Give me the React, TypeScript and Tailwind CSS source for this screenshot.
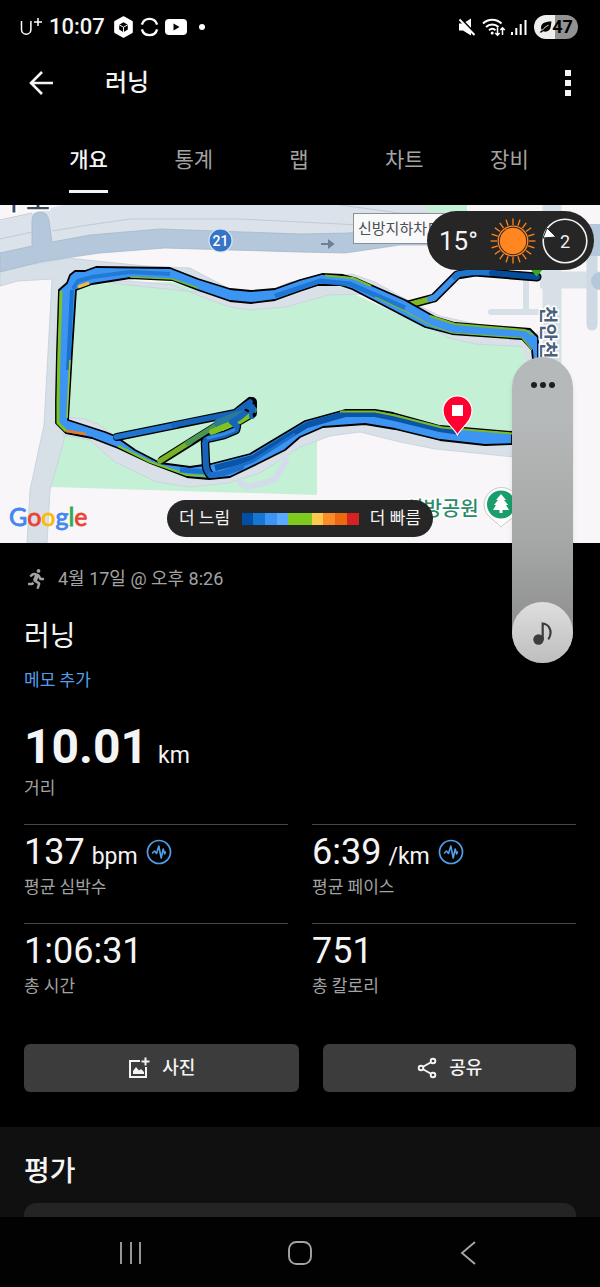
import React, { useState } from 'react';
import { FaRunning } from 'react-icons/fa';

const TABS = ['개요', '통계', '랩', '차트', '장비'];

const PACE_COLORS = [
  'bg-[#004ea6]',
  'bg-[#1776d2]',
  'bg-[#3c95f4]',
  'bg-[#58a9ff]',
  'bg-[#7fca1e]',
  'bg-[#7fca1e]',
  'bg-[#fdca4d]',
  'bg-[#fc8b2a]',
  'bg-[#ec6910]',
  'bg-[#d62222]',
];

interface Stat {
  value: string;
  unit?: string;
  label: string;
}

const STATS: Stat[] = [
  { value: '137', unit: 'bpm', label: '평균 심박수' },
  { value: '6:39', unit: '/km', label: '평균 페이스' },
  { value: '1:06:31', label: '총 시간' },
  { value: '751', label: '총 칼로리' },
];

function StatusBar() {
  return (
    <div className="flex h-[54px] shrink-0 items-center justify-between pl-5 pr-[22px]">
      <div className="flex items-center">
        <svg width="22" height="20" viewBox="0 0 22 20" fill="none" stroke="#fff" strokeWidth="1.5">
          <path d="M1.500 4v8.500a4.700 4.700 0 0 0 9.400 0V4M18 1v8M14 5h8" />
        </svg>
        <span className="ml-[7px] text-[22px] font-medium leading-6">10:07</span>
        <svg className="ml-2" width="21" height="24" viewBox="0 0 22 24">
          <path d="M11 1.500 20 6.500v11L11 22.500 2 17.500v-11z" fill="#fff" stroke="#fff" strokeWidth="1.500" strokeLinejoin="round" />
          <path d="M11 7 15.500 9.700v5L11 17.500 6.500 14.700v-5z" fill="#000" />
          <path d="M6.500 9.700 11 12.200 15.500 9.700 M11 12.200v5.500" fill="none" stroke="#fff" strokeWidth="1" />
        </svg>
        <svg className="ml-1.5" width="19" height="22" viewBox="0 0 20 22" fill="none" stroke="#fff" strokeWidth="2.500">
          <path d="M2 8.500a8.300 8.300 0 0 1 16 0M2 13.500a8.300 8.300 0 0 0 16 0" />
        </svg>
        <svg className="ml-1.5" width="22" height="16" viewBox="0 0 22 16">
          <rect width="22" height="16" rx="4" fill="#fff" />
          <path d="m8.500 4.500 6 3.500-6 3.500z" fill="#000" />
        </svg>
        <span className="ml-3 size-[6px] rounded-full bg-white" />
      </div>
      <div className="flex items-center">
        <svg width="18" height="18" viewBox="0 0 18 18">
          <path d="M1 5.500h4l8-5v17l-8-5H1z" fill="#fff" />
          <path d="M3 1 18 16.500" stroke="#000" strokeWidth="2" />
          <path d="M1.500 1.500 16.500 17" stroke="#fff" strokeWidth="2" />
        </svg>
        <svg className="ml-1.5" width="24" height="20" viewBox="0 0 24 20" fill="none" stroke="#fff" strokeWidth="2">
          <path d="M1 6.500a13 13 0 0 1 18.500 0M4 10a9 9 0 0 1 12.500 0M7 13.200a5 5 0 0 1 6.500 0" />
          <circle cx="10.200" cy="16" r="1.500" fill="#fff" stroke="none" />
          <path d="M15.500 10.500v7.500M13.300 16l2.200 2.200 2.200-2.200M20.500 18v-7M18.300 13l2.200-2.200 2.200 2.200" strokeWidth="1.500" />
        </svg>
        <svg className="ml-1" width="18" height="18" viewBox="0 0 18 18" stroke="#fff" strokeWidth="2">
          <path d="M2 14v3M6.300 10v7M10.700 6v11" />
          <path d="M15.500 2v15" />
        </svg>
        <div className="ml-1.5 flex h-6 w-11 items-center justify-center rounded-full bg-linear-to-r from-[#eee] from-47% to-[#929292] to-47% text-black">
          <svg width="13" height="12" viewBox="0 0 13 12">
            <path d="M12.500.500C7 .500 2 2 2 6.500c0 1 .300 1.800.800 2.500L.500 11.500h2l1.600-1.200c4 1.200 7.200-1 7.600-4.300z" />
            <path d="M3 9.500C5 7 7 5.500 9.500 4.200" stroke="#eee" fill="none" />
          </svg>
          <span className="text-lg font-bold leading-6">47</span>
        </div>
      </div>
    </div>
  );
}

function RouteMap() {
  return (
    <svg className="block w-full" viewBox="0 205 600 338" role="img">
      <rect y="205" width="600" height="338" fill="#f8f6f8" />

      {/* parks */}
      <path d="M76 290 92 284 172 282 230 300 251 304 300 290 345 290 400 315 460 340 530 345 525 433 440 427 375 412 345 412 317 430 317 495 51 487 64 425z" fill="#c4f0d6" />
      <path d="M385 205h82v6l-60 2z" fill="#c4f0d6" />

      {/* side lanes along the highway */}
      <path d="M0 221 30 214 62 205H427V240H350L160 232 52 247 0 257z" fill="#dbe2e9" />
      <path d="M0 220 32 213M0 239 32 232M52 231 82 226 130 219H240L360 225M340 205 400 213H460" fill="none" stroke="#c0cbd5" strokeWidth="1" />

      {/* west junction and the lane next to the river */}
      <path d="M0 270 68 258 145 266 190 268 205 276 232 290 205 290 172 276 96 280 76 290 64 440 50 490 47 543H27L30 490 44 425 52 279 18 281 0 286z" fill="#d7dfe7" stroke="#c4cfda" strokeWidth="0.800" />

      {/* paths on both sides of the loop */}
      <path d="M92 281 130 281 172 285 205 298 230 307 250 310 286 307 328 295 365 294 400 312 450 338 475 344 528 347 530 336 440 316 400 296 375 282 352 274 290 282 251 298z" fill="#d9e0e8" stroke="#c6d1dc" strokeWidth="0.800" />
      <path d="M522 345 525 360H537L540 330z" fill="#d9e0e8" />
      <path d="M68 417 85 419 98 424 112 434 150 460 190 472 250 462 300 432 345 418 440 434 514 438V457L435 449 400 442 360 432 330 436 300 447 260 473 228 483 190 487 157 482 115 462 90 440 62 435z" fill="#d9e0e8" stroke="#c6d1dc" strokeWidth="0.800" />
      <path d="m238 482 10 5 26-7 12-19-4-8" fill="none" stroke="#d3dcea" strokeWidth="6" />

      {/* east streets */}
      <path d="M552 205v340" stroke="#d7dfe7" strokeWidth="19" />
      <path d="M540 280h60" stroke="#d7dfe7" strokeWidth="17" />
      <path d="M526 275v36M491 312h47" stroke="#d7dfe7" strokeWidth="6" strokeLinecap="round" />
      <path d="M592 250v75" stroke="#cfd9e4" strokeWidth="11" strokeLinecap="round" />
      <path d="M585 240h15" stroke="#b5c7da" strokeWidth="32" />
      <circle cx="600" cy="281" r="9" fill="#b5c7da" />

      {/* highway */}
      <path d="M0 253 32 246V221q0-9 8-9t9 9L52 242 90 235 160 229 300 234 350 233 395 222H470V245L400 245 345 253 300 252 165 248 100 253 65 258 40 262 0 272z" fill="#b5c7da" stroke="#a4b9ce" strokeWidth="0.800" />
      <path d="M321 244h9M329 241l4 3-4 3z" stroke="#6f8194" strokeWidth="2" fill="#6f8194" />

      {/* road shield */}
      <circle cx="220.500" cy="240.500" r="11.500" fill="#3674c8" stroke="#d9e6f5" strokeWidth="1.200" />
      <text x="220.500" y="245.500" textAnchor="middle" fontSize="14" fontWeight="500" fill="#fff">21</text>

      {/* map labels */}
      <text x="2" y="210" fontSize="26" fontWeight="500" fill="#3b4660" stroke="#fff" strokeWidth="3" paintOrder="stroke">구도</text>
      <rect x="353.500" y="213.500" width="90" height="30" fill="#f9f9fa" stroke="#8b9198" />
      <text x="358" y="234" fontSize="15" fill="#4c4f55">신방지하차도</text>

      {/* run out to the start point */}
      <g fill="none" strokeLinejoin="round" strokeLinecap="round">
        <path d="m404 306 30-8 23-23 18-3 62 5" stroke="#000" strokeWidth="9" />
        <path d="m404 306 30-8" stroke="#7dbb25" strokeWidth="5.500" />
        <path d="m430 299 5-2 22-22" stroke="#3d92ee" strokeWidth="6" />
        <path d="m455 277 4-3 16-2 18 1" stroke="#1e76cf" strokeWidth="6" />
        <path d="m492 273 45 4" stroke="#074b9b" strokeWidth="6" />
      </g>

      {/* main loop */}
      <path
        d="M57 352 59 290 67 283 70 275 75 271 85 271 96 267 170 268 198 279 230 289 251 291 275 289 300 280 322 274 343 275 355 278 405 300 435 317 455 323 530 329 538 337 538 360 533 360 532 350 522 339 452 334 425 327 400 314 352 289 340 285 318 285 300 291 275 300 251 303 230 301 198 290 172 280 130 278 92 284 76 290 72 352 68 420 105 432 115 436 135 450 160 463 190 467 211 464 250 454 290 430 305 421 345 410 375 410 393 413 440 426 512 432 512 444 485 445 440 440 395 429 365 424 323 427 300 437 285 450 257 464 230 477 209 479 187 477 150 463 118 448 92 438 66 433 56 423 56 400z"
        fill="#3c95f3"
        stroke="#000"
        strokeWidth="1.800"
        strokeLinejoin="round"
      />
      <g fill="none" strokeLinejoin="round">
        <path d="M61 291 59 352 58 400v23l8 8" stroke="#7dc41f" strokeWidth="3" />
        <path d="M72 290 68 370" stroke="#1b73d0" strokeWidth="4" />
        <path d="M70 360 67 418" stroke="#a3c62a" strokeWidth="1.500" />
        <path d="m73 289 5-8 14-4 38-5 40 2" stroke="#1b73d0" strokeWidth="4" opacity="0.800" />
        <path d="m78 287 11-4" stroke="#f5bd3c" strokeWidth="3" />
        <path d="m130 277 42 2 26 9" stroke="#77b82d" strokeWidth="1.500" />
        <path d="m275 296 15-5 30-10 30 3 55 24" stroke="#1b73d0" strokeWidth="5" opacity="0.900" />
        <path d="m325 275.500 28 2.500 18 8M430 316l25 8 70 6 8 5" stroke="#7dbb25" strokeWidth="2" />
        <path d="m375 297 30 14 25 14 22 8 70 5 10 12" stroke="#7dbb25" strokeWidth="1.200" />
        <path d="m66 431 20 3" stroke="#f07b1a" strokeWidth="2.500" />
        <path d="m118 446 32 16 37 13 20 1" stroke="#7dc41f" strokeWidth="2" />
        <path d="m180 470 28 2" stroke="#1b73d0" strokeWidth="5" />
        <path d="m215 468 38-10 39-24 15-9 38-11 30 0 20 4 45 11 20 3" stroke="#0a55a8" strokeWidth="6" />
        <path d="m215 475 38-14 42-27" stroke="#1b6fc9" strokeWidth="3" />
        <path d="m340 411.500 35 0 20 4 47 12 70 6" stroke="#7dbb25" strokeWidth="2" />
      </g>

      {/* detour inside the park */}
      <g fill="none" strokeLinejoin="round" strokeLinecap="round">
        <path d="m117 437 118-24 15-12M162 460l56-35 31-11" stroke="#000" strokeWidth="8" />
        <path d="m252 402 0 11-14 8" stroke="#000" strokeWidth="10" />
        <path d="M210 475q-4-5-4-10l-1-22q0-4 6-5l13-3 12-5 1-4-5-4" stroke="#000" strokeWidth="8.500" />
        <path d="m160 461 30-19" stroke="#73b229" strokeWidth="5.500" />
        <path d="m188 443 30-19" stroke="#4a9553" strokeWidth="5.500" />
        <path d="m116 437 60-12" stroke="#1e74cf" strokeWidth="5.500" />
        <path d="m174 425 61-12 15-11" stroke="#1763b9" strokeWidth="5.500" />
        <path d="m218 423 18-7 14-4 3-2" stroke="#2a7a9e" strokeWidth="8" />
        <path d="m212 432 14-6 14-5 10-6" stroke="#7dc41f" strokeWidth="6" />
        <path d="M210 475q-4-5-4-10l-1-22q0-4 6-5l13-3 12-5 1-4-5-4 8-5 12-10 0 9" stroke="#1665ba" strokeWidth="6" />
        <path d="m208 438 16-4 10-4" stroke="#3289e6" strokeWidth="3" />
        <path d="m246 410 2 1M254 414v2" stroke="#000" strokeWidth="2.500" />
        <path d="m211 475 10-1 20-7" stroke="#1b6fc9" strokeWidth="6" />
      </g>
      <path d="m531 270 5.500 6.500 6-6.500z" fill="#3ba81e" />

      <text transform="translate(541 306) rotate(90)" fontSize="19" fontWeight="700" fill="#4a607b" stroke="#fff" strokeWidth="3" paintOrder="stroke">천안천</text>

      {/* finish pin */}
      <path d="M457.500 435c-4-8-14.500-13-14.500-24.500a14.500 14.500 0 0 1 29 0c0 11.500-10.500 16.500-14.500 24.500z" fill="#ff0030" stroke="#fff" strokeWidth="1.200" />
      <path d="M452 405h11v11h-11z" fill="#fff" />

      {/* park marker */}
      <text x="405" y="516" fontSize="20" fontWeight="500" fill="#2c8a68" stroke="#fff" strokeWidth="3" paintOrder="stroke">신방공원</text>
      <path d="M501 527c-3-5-17-10-17-22a17.500 17.500 0 0 1 35 0c0 12-14 17-18 22z" fill="#fff" stroke="#c9c9c9" strokeWidth="1" />
      <circle cx="501" cy="504.500" r="14" fill="#1a9e6c" />
      <path d="m501 494 5 6h-2l4 5h-2l3 5h-6.500v3h-3v-3H493l3-5h-2l4-5h-2z" fill="#fff" />

      <text x="9" y="526" fontSize="25" fontFamily="Lato, sans-serif" strokeWidth="0.800">
        <tspan fill="#4285f4" stroke="#4285f4">G</tspan>
        <tspan fill="#ea4335" stroke="#ea4335">o</tspan>
        <tspan fill="#fbbc05" stroke="#fbbc05">o</tspan>
        <tspan fill="#4285f4" stroke="#4285f4">g</tspan>
        <tspan fill="#34a853" stroke="#34a853">l</tspan>
        <tspan fill="#ea4335" stroke="#ea4335">e</tspan>
      </text>
    </svg>
  );
}

function WeatherPill() {
  const rays = Array.from({ length: 20 }, (_, i) => i * 18);
  return (
    <div className="absolute right-1.5 top-1.5 flex h-[59px] w-[167px] items-center rounded-full bg-[#262626] pl-3">
      <span className="w-[39px] text-[26px] leading-8">15°</span>
      <svg className="ml-3" width="46" height="46" viewBox="-23 -23 46 46">
        <circle r="13.200" fill="#ff8620" />
        <g stroke="#ff8620" strokeWidth="1.300">
          <circle r="14.800" fill="none" />
          {rays.map((deg) => (
            <path key={deg} d="M0-16v-6.500" transform={`rotate(${deg})`} />
          ))}
        </g>
      </svg>
      <svg className="ml-1.5" width="46" height="46" viewBox="-23 -23 46 46">
        <circle r="21.800" fill="none" stroke="#f1f1f1" strokeWidth="1.600" />
        <path d="m-22-3 4-10 9 9z" fill="#fff" stroke="#262626" strokeWidth="1" />
        <text y="7" textAnchor="middle" fontSize="18" fill="#f1f1f1">2</text>
      </svg>
    </div>
  );
}

function PaceLegend() {
  return (
    <div className="absolute bottom-1.5 left-1/2 flex h-[37px] w-[266px] -translate-x-1/2 items-center justify-between rounded-full bg-[#262626] px-3 text-[17px]">
      <span>더 느림</span>
      <div className="flex h-3 w-[117px]">
        {PACE_COLORS.map((color, i) => (
          <span key={i} className={`flex-1 ${color}`} />
        ))}
      </div>
      <span>더 빠름</span>
    </div>
  );
}

function VolumePanel() {
  const [volume, setVolume] = useState(0);
  return (
    <div className="absolute right-[27px] top-[357px] flex h-[306px] w-[61px] flex-col items-center justify-between rounded-full bg-linear-to-b from-[#b6b9b9] from-20% via-[#a6a7a7] via-60% to-[#868686] shadow-md">
      <button aria-label="더보기" className="flex gap-[3px] px-3 py-[25px]">
        <span className="size-[6px] rounded-full bg-[#1f1f1f]" />
        <span className="size-[6px] rounded-full bg-[#1f1f1f]" />
        <span className="size-[6px] rounded-full bg-[#1f1f1f]" />
      </button>
      <div className="flex size-[61px] items-center justify-center rounded-full bg-linear-to-b from-[#dedede] to-[#bebebe]">
        <svg width="22" height="24" viewBox="0 0 22 24">
          <circle cx="6.500" cy="18.500" r="5.200" fill="#3d3d3d" />
          <path d="M10.700 18.500V2.500C17 3 21 10.500 16.800 17.500" fill="none" stroke="#3d3d3d" strokeWidth="2.200" strokeLinecap="round" />
        </svg>
      </div>
      <input
        type="range"
        aria-label="미디어 음량"
        value={volume}
        onChange={(e) => setVolume(Number(e.target.value))}
        className="absolute inset-x-0 bottom-0 h-60 w-full opacity-0 [writing-mode:vertical-lr] [direction:rtl]"
      />
    </div>
  );
}

function PulseIcon() {
  return (
    <svg width="26" height="26" viewBox="0 0 26 26" fill="none" stroke="#4f9fea" strokeLinejoin="round" strokeLinecap="round">
      <circle cx="13" cy="13" r="11.500" strokeWidth="1.700" />
      <path d="M6.500 14 8.500 12l2 2.500L12.800 7l2.400 12 2-9 1.500 5 .800-2" strokeWidth="1.600" />
    </svg>
  );
}

export default function App() {
  const [activeTab, setActiveTab] = useState('개요');

  return (
    <div className="relative flex min-h-screen flex-col bg-black font-[Roboto,'Noto_Sans_CJK_KR',sans-serif] text-[#f4f4f4]">
      <StatusBar />

      <header className="flex h-[57px] shrink-0 items-center pl-7 pr-5">
        <button aria-label="뒤로">
          <svg width="26" height="26" viewBox="0 0 26 26" fill="none" stroke="#f4f4f4" strokeWidth="2.600">
            <path d="M25 13H3M14 2 3 13l11 11" />
          </svg>
        </button>
        <h1 className="ml-[51px] flex-1 text-2xl font-medium leading-9">러닝</h1>
        <button aria-label="메뉴" className="flex flex-col gap-1 px-[9px]">
          <span className="size-[6px] bg-[#f4f4f4]" />
          <span className="size-[6px] bg-[#f4f4f4]" />
          <span className="size-[6px] bg-[#f4f4f4]" />
        </button>
      </header>

      <nav className="grid h-[94px] shrink-0 grid-cols-5 pb-3 pl-9 pr-[38px] pt-8">
        {TABS.map((tab) => (
          <button
            key={tab}
            onClick={() => setActiveTab(tab)}
            className="flex justify-center text-[21px] leading-[34px]"
          >
            <span
              className={
                tab === activeTab
                  ? 'h-full border-b-3 border-[#f4f4f4] font-medium'
                  : 'h-full border-b-3 border-transparent text-[#a3a3a3]'
              }
            >
              {tab}
            </span>
          </button>
        ))}
      </nav>

      <div className="relative">
        <RouteMap />
        <WeatherPill />
        <PaceLegend />
      </div>

      <main className="px-6 pb-[35px] pt-6">
        <div className="flex h-6 items-center text-lg leading-[26px] text-[#a3a3a3]">
          <FaRunning className="size-6 py-0.5" />
          <span className="ml-2.5">4월 17일 @ 오후 8:26</span>
        </div>
        <h2 className="mt-[26px] text-[28px] leading-10">러닝</h2>
        <button className="mt-2.5 block text-[17px] leading-[26px] text-[#559fea]">메모 추가</button>

        <div className="mt-[26px] flex h-14 items-baseline leading-[56px]">
          <span className="text-[48px] font-bold">10.01</span>
          <span className="ml-2.5 text-[23px] leading-6">km</span>
        </div>
        <p className="text-[17px] leading-[26px] text-[#a3a3a3]">거리</p>

        <div className="mt-[23px] grid grid-cols-2 gap-x-6">
          {STATS.map((stat) => (
            <div key={stat.label} className="border-t border-[#454545] pb-[23px] pt-[7px]">
              <div className="flex h-10 items-center">
                <div className="flex items-baseline">
                  <span className="text-[36px] leading-10">{stat.value}</span>
                  {stat.unit && <span className="ml-[7px] text-[23px] leading-6">{stat.unit}</span>}
                </div>
                {stat.unit && (
                  <button aria-label={stat.label} className="ml-2">
                    <PulseIcon />
                  </button>
                )}
              </div>
              <p className="mt-0.5 text-[17px] leading-[26px] text-[#a3a3a3]">{stat.label}</p>
            </div>
          ))}
        </div>

        <div className="mt-[22px] grid grid-cols-[12fr_11fr] gap-6">
          <button className="flex h-12 items-center justify-center gap-3 rounded-md bg-[#3c3c3c] text-lg font-medium">
            <svg width="22" height="22" viewBox="0 0 22 22" fill="none" stroke="#f4f4f4" strokeWidth="2">
              <path d="M12 4H2v16h16V10M17.500 0.500v8M13.500 4.500h8" />
              <path d="m5 17 0-3 3-4 3 3.500 2-1.500 3 3v2z" fill="#f4f4f4" stroke="none" />
            </svg>
            사진
          </button>
          <button className="flex h-12 items-center justify-center gap-3 rounded-md bg-[#3c3c3c] text-lg font-medium">
            <svg width="20" height="22" viewBox="0 0 20 22" fill="none" stroke="#f4f4f4" strokeWidth="1.900">
              <circle cx="16" cy="4" r="2.300" />
              <circle cx="4" cy="11" r="2.300" />
              <circle cx="16" cy="18" r="2.300" />
              <path d="m6 9.800 8-4.600M6 12.200l8 4.600" />
            </svg>
            공유
          </button>
        </div>
      </main>

      <section className="flex flex-1 flex-col bg-[#101010] px-6 pt-6">
        <h2 className="text-[28px] font-medium leading-[42px]">평가</h2>
        <div className="mt-2.5 min-h-3 flex-1 rounded-t-xl bg-[#242424]" />
      </section>

      <footer className="grid h-[70px] shrink-0 grid-cols-3 items-center bg-[#020202] px-[46px] pt-0.5">
        <button aria-label="최근 앱" className="flex justify-center">
          <svg width="24" height="24" viewBox="0 0 24 24" stroke="#a5a5a5" strokeWidth="1.800">
            <path d="M2 1v22M12 1v22M21 1v22" />
          </svg>
        </button>
        <button aria-label="홈" className="flex justify-center">
          <svg width="26" height="26" viewBox="0 0 26 26" fill="none" stroke="#a5a5a5" strokeWidth="1.900">
            <rect x="2" y="2" width="22" height="22" rx="7.500" />
          </svg>
        </button>
        <button aria-label="뒤로" className="flex justify-center">
          <svg width="18" height="26" viewBox="0 0 18 26" fill="none" stroke="#a5a5a5" strokeWidth="1.900">
            <path d="M15 2 2 13l13 11" />
          </svg>
        </button>
      </footer>

      <VolumePanel />
    </div>
  );
}
